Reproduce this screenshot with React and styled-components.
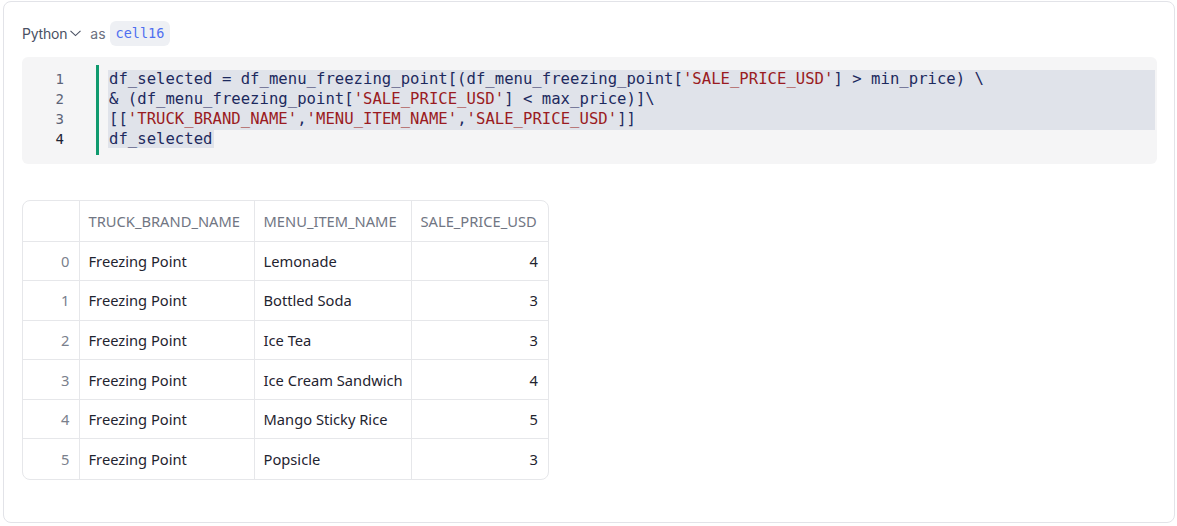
import React from "react";
import styled, { createGlobalStyle } from "styled-components";

const Global = createGlobalStyle`
  html, body { margin: 0; padding: 0; background: #ffffff; }
  body { font-family: Inter, "Noto Sans", sans-serif; }
`;

const Card = styled.div`
  margin: 1px 2px 0 3px;
  height: 522px;
  box-sizing: border-box;
  border: 1px solid #e2e3e8;
  border-radius: 8px;
  padding: 20px 17px 0 18px;
  display: flex;
  flex-direction: column;
`;

const Header = styled.div`
  display: flex;
  align-items: center;
  height: 26px;
  gap: 8px;
  margin-top: -2px;
`;

const LangButton = styled.span`
  display: inline-flex;
  align-items: center;
  gap: 2px;
  font-family: Inter, sans-serif;
  font-size: 14px;
  color: #4a5163;
  letter-spacing: -0.2px;
`;

const AsLabel = styled.span`
  font-family: Inter, sans-serif;
  font-size: 14px;
  color: #6b7080;
`;

const CellBadge = styled.span`
  font-family: "DejaVu Sans Mono", monospace;
  font-size: 13.5px;
  color: #4e6ff0;
  background: #eef0f4;
  border-radius: 6px;
  padding: 5px 6px;
  line-height: 15px;
  margin-left: -4px;
`;

const CodeBlock = styled.div`
  margin-top: 11px;
  background: #f5f5f6;
  border-radius: 6px;
  padding: 8px 2px 9px 0;
  display: flex;
  align-items: stretch;
`;

const Gutter = styled.div`
  width: 42px;
  padding-top: 4px;
  display: flex;
  flex-direction: column;
  align-items: flex-end;
  font-family: "DejaVu Sans Mono", monospace;
  font-size: 14px;
`;

const LineNo = styled.div`
  height: 20px;
  line-height: 20px;
  color: ${(p) => (p.$active ? "#1d2333" : "#5d6479")};
`;

const Bar = styled.div`
  width: 3px;
  background: #0f9a6e;
  margin-left: 32px;
  margin-right: 9px;
`;

const Code = styled.div`
  flex: 1;
  padding: 5px 0;
  font-family: "DejaVu Sans Mono", monospace;
  font-size: 15.6px;
  letter-spacing: 0.02px;
  color: #1d2a5e;
  white-space: pre;
`;

const Line = styled.div`
  height: 20px;
  line-height: 19px;
  background: ${(p) => (p.$selected ? "#e0e3ea" : "transparent")};
  padding-left: 1px;
`;

const Sel = styled.span`
  background: #e0e3ea;
  display: inline-block;
  height: 18px;
  line-height: 19px;
  padding-right: 1px;
  margin-left: -1px;
  padding-left: 1px;
`;

const Str = styled.span`
  color: #9a1b22;
`;

const TableWrap = styled.div`
  margin-top: 36px;
  align-self: flex-start;
  border: 1px solid #e6e7ea;
  border-radius: 8px;
  overflow: hidden;
`;

const Table = styled.table`
  border-collapse: collapse;
  table-layout: fixed;
  width: 525px;
  font-family: "Noto Sans", sans-serif;
  font-size: 14.7px;
`;

const Th = styled.th`
  font-weight: 400;
  color: #717683;
  text-align: left;
  height: 40px;
  padding: 0 9px;
  border-left: 1px solid #e6e7ea;
  border-bottom: 1px solid #e6e7ea;
  white-space: nowrap;
  overflow: hidden;
  box-sizing: border-box;
  width: ${(p) => p.$w}px;
  &:first-child { border-left: none; }
`;

const Td = styled.td`
  height: 39.6px;
  padding: 0 ${(p) => (p.$idx ? 9 : 10)}px 0 9px;
  color: ${(p) => (p.$idx ? "#7a7f8c" : "#1f2430")};
  text-align: ${(p) => (p.$right ? "right" : "left")};
  border-left: 1px solid #e6e7ea;
  border-top: 1px solid #e6e7ea;
  white-space: nowrap;
  box-sizing: border-box;
  &:first-child { border-left: none; }
`;

const rows = [
  ["Freezing Point", "Lemonade", 4],
  ["Freezing Point", "Bottled Soda", 3],
  ["Freezing Point", "Ice Tea", 3],
  ["Freezing Point", "Ice Cream Sandwich", 4],
  ["Freezing Point", "Mango Sticky Rice", 5],
  ["Freezing Point", "Popsicle", 3],
];

export default function App() {
  return (
    <>
      <Global />
      <Card>
        <Header>
          <LangButton>
            Python
            <svg width="13" height="12" viewBox="0 0 13 12" fill="none">
              <path d="M1.5 3.8 L6.5 8.6 L11.5 3.8" stroke="#4a5163" strokeWidth="1.1" />
            </svg>
          </LangButton>
          <AsLabel>as</AsLabel>
          <CellBadge>cell16</CellBadge>
        </Header>
        <CodeBlock>
          <Gutter>
            <LineNo>1</LineNo>
            <LineNo>2</LineNo>
            <LineNo>3</LineNo>
            <LineNo $active>4</LineNo>
          </Gutter>
          <Bar />
          <Code>
            <Line $selected>
              {"df_selected = df_menu_freezing_point[(df_menu_freezing_point["}
              <Str>'SALE_PRICE_USD'</Str>
              {"] > min_price) \\"}
            </Line>
            <Line $selected>
              {"& (df_menu_freezing_point["}
              <Str>'SALE_PRICE_USD'</Str>
              {"] < max_price)]\\"}
            </Line>
            <Line $selected>
              {"[["}
              <Str>'TRUCK_BRAND_NAME'</Str>
              {","}
              <Str>'MENU_ITEM_NAME'</Str>
              {","}
              <Str>'SALE_PRICE_USD'</Str>
              {"]]"}
            </Line>
            <Line>
              <Sel>df_selected</Sel>
            </Line>
          </Code>
        </CodeBlock>
        <TableWrap>
          <Table>
            <thead>
              <tr>
                <Th $w={56}></Th>
                <Th $w={175}>TRUCK_BRAND_NAME</Th>
                <Th $w={157}>MENU_ITEM_NAME</Th>
                <Th $w={137}>SALE_PRICE_USD</Th>
              </tr>
            </thead>
            <tbody>
              {rows.map((r, i) => (
                <tr key={i}>
                  <Td $idx $right>{i}</Td>
                  <Td>{r[0]}</Td>
                  <Td>{r[1]}</Td>
                  <Td $right>{r[2]}</Td>
                </tr>
              ))}
            </tbody>
          </Table>
        </TableWrap>
      </Card>
    </>
  );
}
